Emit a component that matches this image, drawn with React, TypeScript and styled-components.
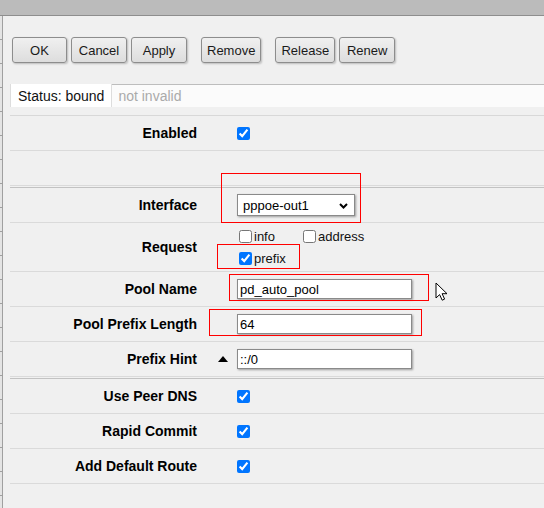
import * as React from 'react';
import styled, { createGlobalStyle } from 'styled-components';

const GlobalStyle = createGlobalStyle`
  html, body {
    margin: 0;
    padding: 0;
  }
  body {
    background: #f0f0f0;
    font-family: "Liberation Sans", Arial, sans-serif;
    font-size: 13px;
    color: #000;
  }
`;

const Page = styled.div`
  display: flex;
  flex-direction: column;
  min-height: 508px;
`;

const TitleBar = styled.div`
  height: 15px;
  background: #bbbbbb;
  border-bottom: 1px solid #8e8e8e;
`;

const Body = styled.div`
  display: flex;
  flex: 1;
`;

const Rail = styled.div`
  width: 2px;
  border-right: 1px solid #a0a0a0;
  background: repeating-linear-gradient(to bottom, #e4e4e4 0 23px, #a0a0a0 23px 24px);
`;

const Main = styled.div`
  flex: 1;
  padding-left: 7px;
`;

const Toolbar = styled.div`
  display: flex;
  gap: 14px;
  padding: 21px 0 0 2px;
`;

const ButtonGroup = styled.div`
  display: flex;
  gap: 4px;
`;

const Button = styled.button<{ $min?: number }>`
  min-width: ${({ $min }) => $min ?? 56}px;
  height: 26px;
  padding: 0 5px;
  border: 1px solid #8d8d8d;
  border-radius: 3px;
  background: linear-gradient(#f0f0f0, #dddddd);
  box-shadow: 1px 1px 2px rgba(0, 0, 0, 0.22);
  font: 13px "Liberation Sans", Arial, sans-serif;
  color: #1a1a1a;
`;

const StatusBar = styled.div`
  display: flex;
  margin-top: 21px;
  height: 23px;
  font-size: 14px;
`;

const StatusTab = styled.div`
  display: flex;
  align-items: center;
  flex-shrink: 0;
  white-space: nowrap;
  padding: 1px 7px 0;
  background: #ffffff;
  border-left: 1px solid #dddddd;
  border-right: 1px solid #dddddd;
  color: #111;
`;

const StatusText = styled.div`
  flex: 1;
  display: flex;
  align-items: center;
  padding-left: 6px;
  background: #fbfbfb;
  border-top: 1px solid #bdbdbd;
  color: #aaaaaa;
`;

const Form = styled.div`
  margin-top: 8px;
`;

const Section = styled.div<{ $split?: boolean }>`
  margin-top: ${({ $split }) => ($split ? '1px' : '0')};
  border-top: 1px solid ${({ $split }) => ($split ? '#c2c2c2' : '#d8d8d8')};
`;

const Row = styled.div<{ $pad?: number }>`
  display: flex;
  align-items: center;
  min-height: 34px;
  padding: ${({ $pad }) => $pad ?? 0}px 0;
  border-bottom: 1px solid #dadada;
`;

const Label = styled.div`
  width: 187px;
  flex-shrink: 0;
  text-align: right;
  font-weight: bold;
  font-size: 14px;
`;

const Marker = styled.div`
  width: 40px;
  flex-shrink: 0;
  box-sizing: border-box;
  display: flex;
  justify-content: flex-end;
  padding-right: 9px;
`;

const Control = styled.div`
  flex: 1;
  display: flex;
  flex-direction: column;
  align-items: flex-start;
  gap: 2px;
`;

const Anchor = styled.div`
  position: relative;
  display: inline-flex;
  align-items: center;
`;

const Highlight = styled.span<{ $x: number; $y: number; $w: number; $h: number }>`
  position: absolute;
  left: ${({ $x }) => $x}px;
  top: ${({ $y }) => $y}px;
  width: ${({ $w }) => $w}px;
  height: ${({ $h }) => $h}px;
  box-sizing: border-box;
  border: 1px solid #ff0000;
  pointer-events: none;
`;

const Checkbox = styled.input.attrs({ type: 'checkbox' })`
  margin: 0;
  width: 13px;
  height: 13px;
  accent-color: #0075ff;
`;

const OptionLine = styled.div`
  display: flex;
  height: 20px;
  align-items: center;
  padding-left: 2px;
`;

const Option = styled.label<{ $width?: number }>`
  display: inline-flex;
  align-items: center;
  gap: 2px;
  width: ${({ $width }) => ($width ? `${$width}px` : 'auto')};
  font-size: 13px;
  color: #111;
`;

const TextInput = styled.input`
  width: 175px;
  height: 20px;
  box-sizing: border-box;
  padding: 0 2px;
  border: 1px solid #8a8a8a;
  background: #ffffff;
  box-shadow: 1px 1px 2px rgba(0, 0, 0, 0.35);
  font: 13px "Liberation Sans", Arial, sans-serif;
  color: #000;
  outline: none;
`;

const Select = styled.select`
  appearance: none;
  width: 118px;
  height: 22px;
  box-sizing: border-box;
  padding: 0 20px 0 5px;
  border: 1px solid #8a8a8a;
  border-radius: 0;
  background: #ffffff;
  box-shadow: 1px 1px 2px rgba(0, 0, 0, 0.35);
  font: 13px "Liberation Sans", Arial, sans-serif;
  color: #000;
`;

const Chevron = styled.svg`
  position: absolute;
  right: 7px;
  top: 9px;
  pointer-events: none;
`;

const Pointer = styled.svg`
  position: absolute;
  left: 198px;
  top: 3px;
  pointer-events: none;
`;

function Check(props: { on?: boolean }) {
  return <Checkbox defaultChecked={props.on} />;
}

export default function App() {
  return (
    <Page>
      <GlobalStyle />
      <TitleBar />
      <Body>
        <Rail />
        <Main>
          <Toolbar>
            <ButtonGroup>
              <Button $min={55}>OK</Button>
              <Button>Cancel</Button>
              <Button>Apply</Button>
            </ButtonGroup>
            <ButtonGroup>
              <Button>Remove</Button>
            </ButtonGroup>
            <ButtonGroup>
              <Button>Release</Button>
              <Button>Renew</Button>
            </ButtonGroup>
          </Toolbar>

          <StatusBar>
            <StatusTab>Status: bound</StatusTab>
            <StatusText>not invalid</StatusText>
          </StatusBar>

          <Form>
            <Section>
              <Row>
                <Label>Enabled</Label>
                <Marker />
                <Control>
                  <Check on />
                </Control>
              </Row>
              <Row />
            </Section>

            <Section $split>
              <Row>
                <Label>Interface</Label>
                <Marker />
                <Control>
                  <Anchor>
                    <Select defaultValue="pppoe-out1">
                      <option>pppoe-out1</option>
                    </Select>
                    <Chevron width="9" height="6" viewBox="0 0 9 6">
                      <path d="M1 1l3.5 3.5L8 1" fill="none" stroke="#000" strokeWidth="2" />
                    </Chevron>
                    <Highlight $x={-16} $y={-21} $w={140} $h={50} />
                  </Anchor>
                </Control>
              </Row>
              <Row $pad={3}>
                <Label>Request</Label>
                <Marker />
                <Control>
                  <OptionLine>
                    <Option $width={64}>
                      <Check />
                      info
                    </Option>
                    <Option>
                      <Check />
                      address
                    </Option>
                  </OptionLine>
                  <OptionLine>
                    <Anchor>
                      <Option>
                        <Check on />
                        prefix
                      </Option>
                      <Highlight $x={-22} $y={-7} $w={83} $h={25} />
                    </Anchor>
                  </OptionLine>
                </Control>
              </Row>
              <Row>
                <Label>Pool Name</Label>
                <Marker />
                <Control>
                  <Anchor>
                    <TextInput defaultValue="pd_auto_pool" />
                    <Highlight $x={-8} $y={-5} $w={200} $h={27} />
                    <Pointer width="13" height="19" viewBox="0 0 13 19">
                      <path
                        d="M1 1v15l3.6-3.4 2.6 5.6 2.4-1.1-2.5-5.4H12Z"
                        fill="#fff"
                        stroke="#000"
                        strokeWidth="1"
                        strokeLinejoin="round"
                      />
                    </Pointer>
                  </Anchor>
                </Control>
              </Row>
              <Row>
                <Label>Pool Prefix Length</Label>
                <Marker />
                <Control>
                  <Anchor>
                    <TextInput defaultValue="64" />
                    <Highlight $x={-28} $y={-5} $w={213} $h={27} />
                  </Anchor>
                </Control>
              </Row>
              <Row>
                <Label>Prefix Hint</Label>
                <Marker>
                  <svg width="10" height="6" viewBox="0 0 10 6">
                    <path d="M0 6L5 0l5 6Z" fill="#000" />
                  </svg>
                </Marker>
                <Control>
                  <TextInput defaultValue="::/0" />
                </Control>
              </Row>
            </Section>

            <Section $split>
              <Row>
                <Label>Use Peer DNS</Label>
                <Marker />
                <Control>
                  <Check on />
                </Control>
              </Row>
              <Row>
                <Label>Rapid Commit</Label>
                <Marker />
                <Control>
                  <Check on />
                </Control>
              </Row>
              <Row>
                <Label>Add Default Route</Label>
                <Marker />
                <Control>
                  <Check on />
                </Control>
              </Row>
            </Section>
          </Form>
        </Main>
      </Body>
    </Page>
  );
}
